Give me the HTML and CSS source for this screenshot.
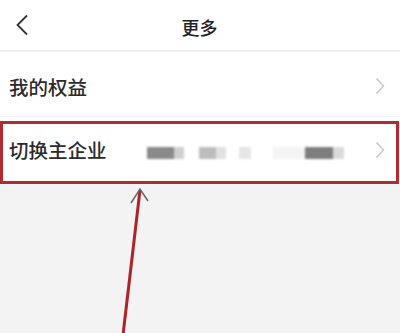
FILE: index.html
```
<!DOCTYPE html>
<html lang="zh">
<head>
<meta charset="utf-8">
<link rel="stylesheet" href="styles.css">
</head>
<body>
<div class="page">
  <header class="nav">
    <svg class="back" width="14" height="22" viewBox="0 0 14 22"><path d="M12 1.5 L2.5 11 L12 20.5" fill="none" stroke="#333" stroke-width="1.8"/></svg>
    <div class="title">更多</div>
  </header>
  <div class="list">
    <div class="row row-first">
      <span class="label">我的权益</span>
      <svg class="chev" width="10" height="18" viewBox="0 0 10 18"><path d="M1.5 1.5 L8.5 9 L1.5 16.5" fill="none" stroke="#c8c8c8" stroke-width="1.5"/></svg>
    </div>
    <div class="row row-second">
      <span class="label">切换主企业</span>
      <div class="blur">
        <span class="b b1"></span><span class="b b2"></span><span class="b b3"></span><span class="b b4"></span><span class="b b5"></span><span class="b b6"></span><span class="b b7"></span><span class="b b8"></span>
      </div>
      <svg class="chev" width="10" height="18" viewBox="0 0 10 18"><path d="M1.5 1.5 L8.5 9 L1.5 16.5" fill="none" stroke="#c8c8c8" stroke-width="1.5"/></svg>
    </div>
  </div>
  <div class="highlight"></div>
  <svg class="arrow" width="400" height="333" viewBox="0 0 400 333">
    <path d="M123 335 L140 190" stroke="#b0222a" stroke-width="3" fill="none"/>
    <path d="M131 203 L140 189 L148 201" stroke="#666" stroke-width="1.5" fill="none"/>
  </svg>
</div>
</body>
</html>
```
FILE: styles.css
```
html, body {
  margin: 0;
  padding: 0;
}
body {
  background: #f3f3f4;
  font-family: "Noto Sans CJK SC", "Noto Sans", sans-serif;
  color: #333;
  width: 400px;
  height: 333px;
  overflow: hidden;
}
.page {
  position: relative;
  width: 400px;
  height: 333px;
}
.nav {
  height: 50px;
  background: #fff;
  border-bottom: 2px solid #efefef;
  display: flex;
  align-items: center;
  justify-content: center;
  position: relative;
}
.back {
  position: absolute;
  left: 15px;
  top: 14px;
}
.title {
  font-size: 18px;
  font-weight: 500;
  color: #222;
  margin-left: -1px;
  margin-top: 3px;
}
.list {
  background: #fff;
}
.row {
  display: flex;
  align-items: center;
  padding: 0 15px 0 9px;
  background: #fff;
}
.row-first {
  height: 64px;
  border-bottom: 1px solid #eef5f6;
}
.row-second {
  height: 68px;
}
.label {
  font-size: 19.5px;
  font-weight: 500;
  color: #2b2b2b;
  flex: none;
}
.row-first .label {
  margin-top: 4px;
}
.row-second .label {
  margin-top: -3px;
}
.chev {
  margin-left: auto;
  flex: none;
}
.row-first .chev {
  margin-top: 4px;
}
.row-second .chev {
  margin-top: -2px;
}
.blur {
  display: flex;
  align-items: center;
  margin-left: 40px;
  height: 14px;
  filter: blur(1px);
  margin-top: 3px;
}
.b {
  display: block;
  height: 12px;
}
.b1 { width: 27px; background: #8a8a8a; }
.b2 { width: 10px; background: #cfcfcf; margin-right: 15px; }
.b3 { width: 17px; background: #bdbdbd; }
.b4 { width: 10px; background: #e2e2e2; margin-right: 13px; }
.b5 { width: 12px; background: #e6e6e6; margin-right: 22px; }
.b6 { width: 32px; background: #f4f4f4; }
.b7 { width: 28px; background: #7e7e7e; }
.b8 { width: 11px; background: #dadada; }
.highlight {
  position: absolute;
  left: 0;
  top: 121px;
  width: 393px;
  height: 57px;
  border: 3px solid #b52a30;
}
.arrow {
  position: absolute;
  left: 0;
  top: 0;
}
```
